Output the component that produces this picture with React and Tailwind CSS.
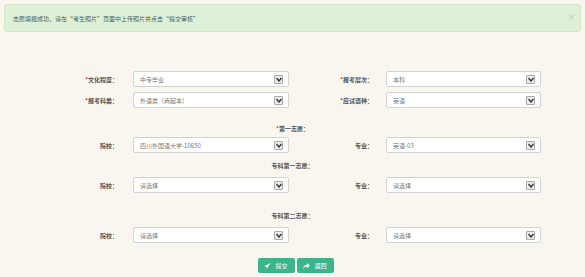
import React from "react";

const font = { fontFamily: '"Noto Sans CJK SC", "Noto Sans", sans-serif' };

const Arrow = () => (
  <span className="flex h-[9px] w-[9px] items-center justify-center rounded-[1px] border border-[#a9a9a9] bg-[#ececec]">
    <svg width="6" height="5" viewBox="0 0 6 5">
      <path d="M0.5 1 L3 4 L5.5 1" fill="none" stroke="#333" strokeWidth="1.4" />
    </svg>
  </span>
);

const Select = ({ value, w }) => (
  <div
    className={`flex h-[16px] ${w} items-center justify-between rounded-[2px] border border-[#d3d3d3] bg-white pl-[6px] pr-[5px] text-[6px] text-[#777]`}
  >
    <span>{value}</span>
    <Arrow />
  </div>
);

const Label = ({ text, req, w }) => (
  <div className={`${w} text-right text-[6px] font-bold text-[#555]`}>
    {req && <span className="text-[#c33]">*</span>}
    {text}
  </div>
);

const Row = ({ l1, v1, l2, v2, req, className = "" }) => (
  <div className={`flex items-center pl-[50px] ${className}`}>
    <Label text={l1} req={req} w="w-[68px]" />
    <div className="ml-[15px]">
      <Select value={v1} w="w-[156px]" />
    </div>
    <Label text={l2} req={req} w="w-[84px]" />
    <div className="ml-[13px]">
      <Select value={v2} w="w-[155px]" />
    </div>
  </div>
);

const Title = ({ text, req, className = "" }) => (
  <div className={`flex h-[10px] items-center justify-center text-[6px] font-bold text-[#555] ${className}`}>
    {req && <span className="text-[#e33]">*</span>}
    {text}
  </div>
);

export default function App() {
  return (
    <div className="h-[277px] w-full bg-[#f9f6ef] pt-[4px]" style={font}>
      <div className="relative mx-[4px] flex h-[28px] items-center rounded-[3px] border border-[#d4e8c8] bg-[#def0d8] pl-[8px] text-[6px] text-[#4f5f4c]">
        志愿填报成功，请在“考生照片”页面中上传照片并点击“提交审核”
        <span className="absolute right-[4px] top-[7px] text-[9px] leading-none text-[#b9c9b4]">×</span>
      </div>

      <Row className="mt-[39px]" req l1="文化程度：" v1="中专毕业" l2="报考层次：" v2="本科" />
      <Row className="mt-[5px]" req l1="报考科类：" v1="外语类（商起本）" l2="应试语种：" v2="英语" />

      <Title className="mt-[15px]" req text="第一志愿：" />
      <Row className="mt-[4px]" l1="院校：" v1="四川外国语大学-10650" l2="专业：" v2="英语-03" />

      <Title className="mt-[7px]" text="专科第一志愿：" />
      <Row className="mt-[7px]" l1="院校：" v1="请选择" l2="专业：" v2="请选择" />

      <Title className="mt-[17px]" text="专科第二志愿：" />
      <Row className="mt-[7px]" l1="院校：" v1="请选择" l2="专业：" v2="请选择" />

      <div className="mt-[15px] flex justify-center gap-[2px] pl-[6px]">
        <button className="flex h-[15px] w-[37px] items-center justify-center gap-[4px] rounded-[2px] bg-[#3cb48c] text-[6px] text-white">
          <svg width="7" height="6" viewBox="0 0 7 6">
            <path d="M6.5 0 L0 3.2 L2.4 3.6 L2.8 6 L3.8 4.2 L6.5 0 Z" fill="white" />
          </svg>
          提交
        </button>
        <button className="flex h-[15px] w-[37px] items-center justify-center gap-[4px] rounded-[2px] bg-[#3cb48c] text-[6px] text-white">
          <svg width="7" height="6" viewBox="0 0 7 6">
            <path d="M4 0 L7 2.6 L4 5.2 L4 3.6 C2.4 3.6 1.2 4.2 0 6 C0.4 3.4 1.8 1.8 4 1.6 Z" fill="white" />
          </svg>
          返回
        </button>
      </div>
    </div>
  );
}
